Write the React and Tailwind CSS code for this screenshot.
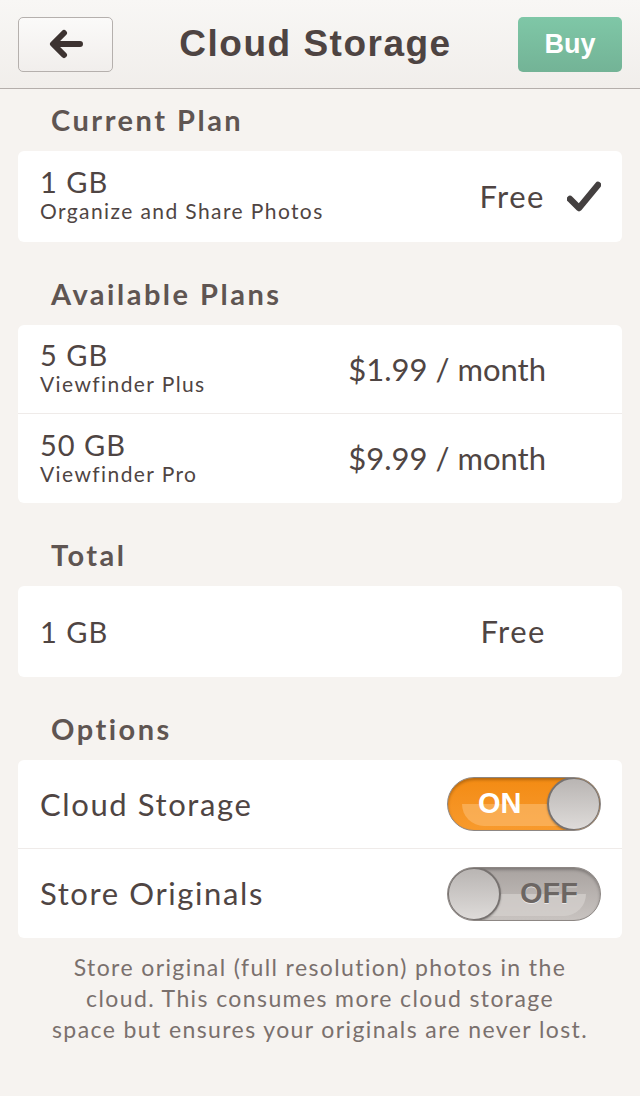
import React, { useState } from 'react';

const body = { fontFamily: 'Lato, "Open Sans", sans-serif' };

const Toggle = ({ on, onClick }) => (
  <button
    onClick={onClick}
    className={`relative w-[154px] h-[54px] rounded-full border border-[#8d8784] overflow-hidden shadow-[inset_0_2px_3px_rgba(0,0,0,0.25)] ${
      on ? 'bg-gradient-to-b from-[#f38b12] to-[#f89a2c]' : 'bg-gradient-to-b from-[#a9a3a0] to-[#c8c3c0]'
    }`}
  >
    {/* lower gloss */}
    <div
      className={`absolute left-[14px] right-[14px] bottom-[4px] h-[22px] rounded-t-[14px] rounded-b-full ${
        on ? 'bg-[#fbb765]/70' : 'bg-[#d6d2cf]/70'
      }`}
    />
    <span
      className={`absolute top-0 bottom-0 flex items-center text-[29px] font-bold ${
        on ? 'left-[30px] text-white' : 'right-[22px] text-[#6c6663] [text-shadow:0_1px_0_rgba(255,255,255,0.6)]'
      }`}
      style={{ fontFamily: '"Liberation Sans", Arial, sans-serif' }}
    >
      {on ? 'ON' : 'OFF'}
    </span>
    <div
      className={`absolute top-[-1px] w-[54px] h-[54px] rounded-full border-2 border-[#777270] bg-gradient-to-b from-[#b9b5b3] to-[#dedbd9] shadow-[0_1px_2px_rgba(0,0,0,0.3)] ${
        on ? 'right-[-1px]' : 'left-[-1px]'
      }`}
    />
  </button>
);

const SectionLabel = ({ children, first }) => (
  <div className={`${first ? 'h-[62px] pt-[16px]' : 'h-[83px] pt-[37px]'} pl-[33px]`}>
    <h2 className="text-[29px] leading-[30px] font-bold tracking-[2.5px] text-[#5f5552]" style={body}>
      {children}
    </h2>
  </div>
);

const PlanRow = ({ size, name, price, last }) => (
  <div className={`h-[89px] flex items-center justify-between pl-[22px] pr-[76px] ${last ? '' : 'border-b border-[#efebe9]'}`}>
    <div className="flex flex-col -mt-[3px]">
      <span className="text-[29px] leading-[32px] tracking-[1px] text-[#4f4543]">{size}</span>
      <span className="text-[21px] leading-[25px] tracking-[1.4px] text-[#4f4543]">{name}</span>
    </div>
    <span className="text-[31px] text-[#4f4543]">{price}</span>
  </div>
);

const OptionRow = ({ label, on, onClick, last }) => (
  <div className={`h-[89px] flex items-center justify-between pl-[22px] pr-[21px] ${last ? '' : 'border-b border-[#efebe9]'}`}>
    <span className="text-[31px] tracking-[1.6px] text-[#4f4543]">{label}</span>
    <Toggle on={on} onClick={onClick} />
  </div>
);

export default function App() {
  const [cloud, setCloud] = useState(true);
  const [originals, setOriginals] = useState(false);

  return (
    <div className="w-[640px] h-[1096px] bg-[#f6f3f0] overflow-hidden" style={body}>
      {/* Header */}
      <div className="h-[89px] flex items-center justify-between px-[18px] bg-gradient-to-b from-[#f8f7f5] to-[#f1eeeb] border-b border-[#b4aeab]">
        <button className="w-[95px] h-[55px] rounded-[5px] border border-[#b5b0ad] bg-gradient-to-b from-[#fbfaf9] to-[#f1eeec] flex items-center justify-center">
          <svg width="34" height="30" viewBox="0 0 34 30">
            <path d="M31 15 H6 M15 4 L4 15 L15 26" fill="none" stroke="#3d3331" strokeWidth="6" strokeLinecap="round" strokeLinejoin="round" />
          </svg>
        </button>
        <h1
          className="text-[37px] font-bold text-[#4e4442] tracking-[1.5px]"
          style={{ fontFamily: '"Liberation Sans", Arial, sans-serif' }}
        >
          Cloud Storage
        </h1>
        <button
          className="w-[104px] h-[55px] rounded-[5px] bg-gradient-to-b from-[#7fc7a7] to-[#73b396] text-white text-[27px] font-bold"
          style={{ fontFamily: '"Liberation Sans", Arial, sans-serif' }}
        >
          Buy
        </button>
      </div>

      <div className="px-[18px]">
        <SectionLabel first>Current Plan</SectionLabel>
        <div className="bg-white rounded-[6px] h-[91px] flex items-center justify-between pl-[22px] pr-[21px]">
          <div className="flex flex-col -mt-[3px]">
            <span className="text-[29px] leading-[32px] tracking-[1px] text-[#4f4543]">1 GB</span>
            <span className="text-[21px] leading-[26px] tracking-[1.4px] text-[#4f4543]">Organize and Share Photos</span>
          </div>
          <div className="flex items-center gap-[22px]">
            <span className="text-[31px] tracking-[1.5px] text-[#4f4543]">Free</span>
            <svg width="34" height="32" viewBox="0 0 34 32">
              <path d="M3 18 L12 27 L31 4" fill="none" stroke="#444040" strokeWidth="6.5" strokeLinecap="round" strokeLinejoin="round" />
            </svg>
          </div>
        </div>

        <SectionLabel>Available Plans</SectionLabel>
        <div className="bg-white rounded-[6px]">
          <PlanRow size="5 GB" name="Viewfinder Plus" price="$1.99 / month" />
          <PlanRow size="50 GB" name="Viewfinder Pro" price="$9.99 / month" last />
        </div>

        <SectionLabel>Total</SectionLabel>
        <div className="bg-white rounded-[6px] h-[91px] flex items-center justify-between pl-[22px] pr-[76px]">
          <span className="text-[29px] tracking-[1px] text-[#4f4543]">1 GB</span>
          <span className="text-[31px] tracking-[1.5px] text-[#4f4543]">Free</span>
        </div>

        <SectionLabel>Options</SectionLabel>
        <div className="bg-white rounded-[6px]">
          <OptionRow label="Cloud Storage" on={cloud} onClick={() => setCloud(!cloud)} />
          <OptionRow label="Store Originals" on={originals} onClick={() => setOriginals(!originals)} last />
        </div>

        <p className="mt-[14px] text-center text-[23px] leading-[31px] tracking-[1.4px] text-[#7a706d]">
          Store original (full resolution) photos in the
          <br />
          cloud. This consumes more cloud storage
          <br />
          space but ensures your originals are never lost.
        </p>
      </div>
    </div>
  );
}
